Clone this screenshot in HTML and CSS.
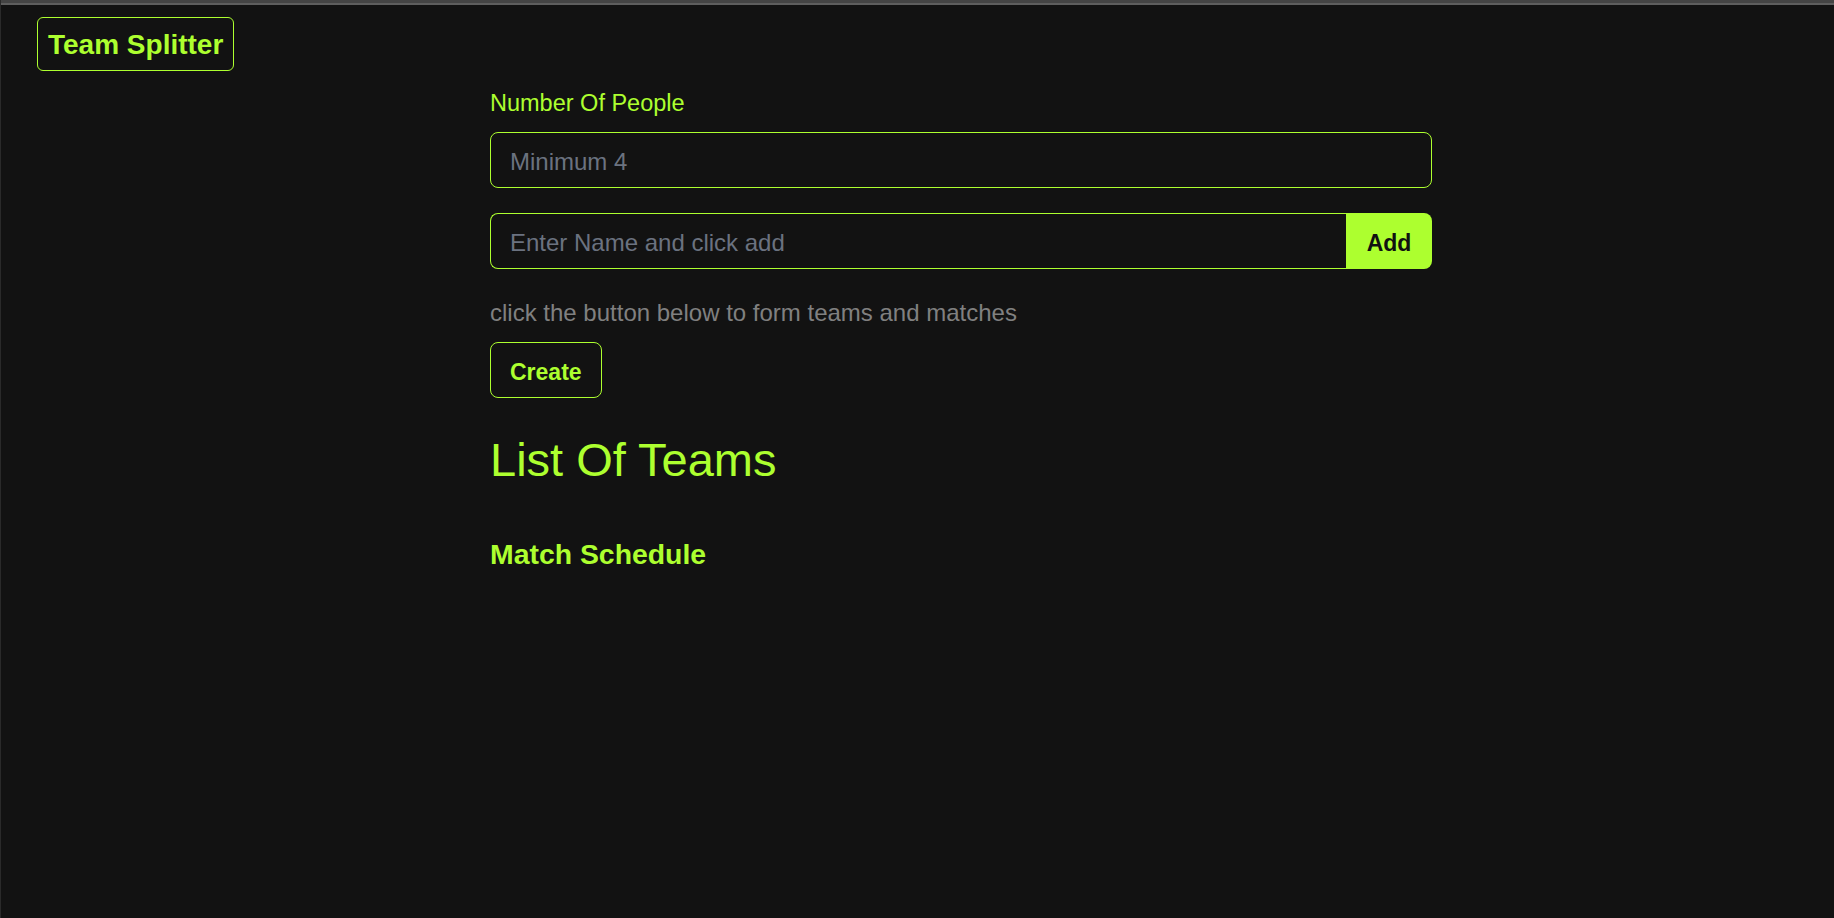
FILE: index.html
```html
<!DOCTYPE html>
<html lang="en">
<head>
<meta charset="utf-8">
<title>Team Splitter</title>
<link rel="stylesheet" href="styles.css">
</head>
<body>
<div class="page">
  <div class="topbar"></div>
  <header class="header">
    <div class="brand">Team Splitter</div>
  </header>
  <main class="main">
    <label class="label" for="count">Number Of People</label>
    <input id="count" class="field" type="text" placeholder="Minimum 4">
    <div class="add-row">
      <input class="field field-name" type="text" placeholder="Enter Name and click add">
      <button class="add-btn">Add</button>
    </div>
    <p class="hint">click the button below to form teams and matches</p>
    <button class="create-btn">Create</button>
    <h1 class="teams-title">List Of Teams</h1>
    <h2 class="schedule-title">Match Schedule</h2>
  </main>
</div>
</body>
</html>
```
FILE: styles.css
```css
* { box-sizing: border-box; }
html, body {
  margin: 0;
  padding: 0;
  background: #121212;
  font-family: "Liberation Sans", Arial, sans-serif;
}
.page {
  min-height: 100vh;
  border-left: 1px solid #2a2a2a;
}
.topbar {
  height: 5px;
  border-top: 3px solid #444444;
  background: #5e5e5e;
}
.header {
  padding: 12px 0 0 36px;
  display: flex;
}
.brand {
  border: 1px solid #adff2f;
  border-radius: 6px;
  color: #adff2f;
  font-weight: 700;
  font-size: 28px;
  line-height: 50px;
  padding: 2px 10px 0 10px;
}
.main {
  margin-left: 489px;
  width: 942px;
  display: flex;
  flex-direction: column;
  align-items: flex-start;
}
.label {
  margin-top: 19px;
  color: #adff2f;
  font-size: 23.5px;
  line-height: 26px;
}
.field {
  margin-top: 16px;
  width: 100%;
  height: 56px;
  padding: 3px 19px 0 19px;
  background: transparent;
  border: 1px solid #adff2f;
  border-radius: 8px;
  color: #e5e5e5;
  font-family: "Liberation Sans", Arial, sans-serif;
  font-size: 24px;
  outline: none;
}
.field::placeholder { color: #6b7280; }
.add-row {
  margin-top: 25px;
  width: 100%;
  display: flex;
}
.field-name {
  margin-top: 0;
  flex: 1;
  border-right: none;
  border-radius: 8px 0 0 8px;
}
.add-btn {
  width: 86px;
  height: 56px;
  border: none;
  border-radius: 0 8px 8px 0;
  background: #adff2f;
  color: #111111;
  font-family: "Liberation Sans", Arial, sans-serif;
  font-weight: 700;
  font-size: 23px;
  padding: 4px 0 0 0;
}
.hint {
  margin: 31px 0 0 0;
  color: #808080;
  font-size: 24px;
  line-height: 25px;
}
.create-btn {
  margin-top: 17px;
  height: 56px;
  padding: 4px 19px 0 19px;
  background: transparent;
  border: 1px solid #adff2f;
  border-radius: 8px;
  color: #adff2f;
  font-family: "Liberation Sans", Arial, sans-serif;
  font-weight: 700;
  font-size: 23px;
}
.teams-title {
  margin: 35px 0 0 0;
  color: #adff2f;
  font-weight: 400;
  font-size: 47px;
  line-height: 54px;
}
.schedule-title {
  margin: 51px 0 0 0;
  color: #adff2f;
  font-weight: 700;
  font-size: 28.4px;
  line-height: 32px;
}
```
